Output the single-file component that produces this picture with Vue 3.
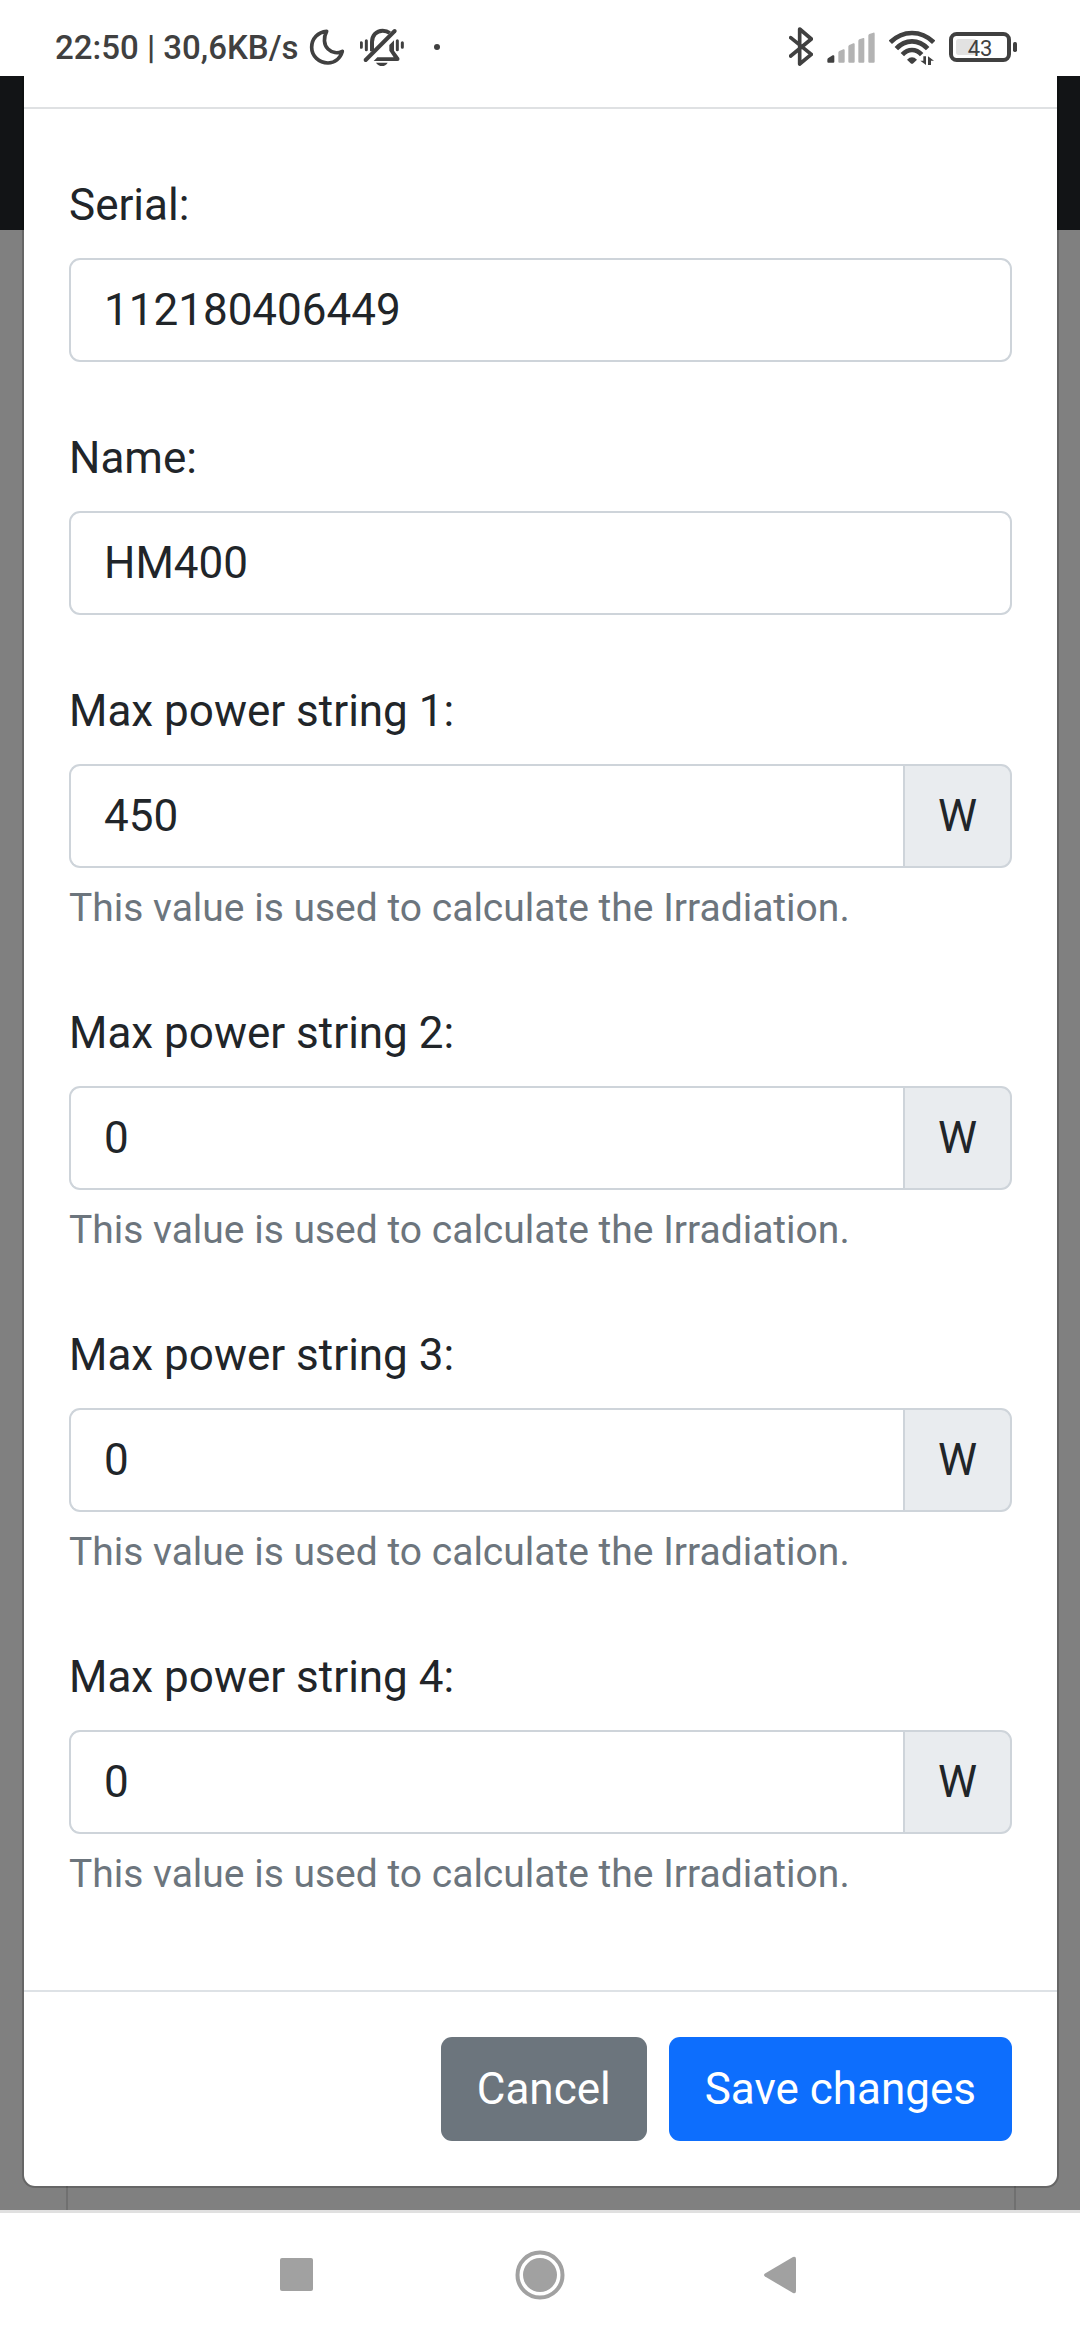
<script setup>
import { ref } from 'vue'

const serial = ref('112180406449')
const name = ref('HM400')
const strings = ref([
  { id: 1, power: '450' },
  { id: 2, power: '0' },
  { id: 3, power: '0' },
  { id: 4, power: '0' }
])
</script>

<template>
  <div class="screen">
    <header class="status">
      <span class="clock">22:50 | 30,6KB/s</span>
      <div class="left-icons">
        <svg class="icon" width="36" viewBox="27 51 108 126" aria-hidden="true">
          <path class="line" stroke-width="11" d="M80 64C54 66 35 86 35 112C35 138 57 159 84 159C104 159 121 146 127 124C113 131 96 129 84 117C71 104 70 82 80 64Z" />
        </svg>
        <svg class="icon" width="44" viewBox="180 51 132 126" aria-hidden="true">
          <path class="line" stroke-width="9" d="M184 98V112M199 92V119M292 92V119M307 98V112" />
          <path class="line butt" stroke-width="12" d="M216 124V96C216 76 229 62 248 62C256 62 263 64 269 69" />
          <path class="line" stroke-width="12" d="M284 63L197 150" />
          <path class="solid" d="M268 105L282 91V122L298 144Q300 153 292 153H221L232 142H281L268 122Z" />
          <path class="solid" d="M228 158H263Q257 168 246 168T228 158Z" />
        </svg>
        <svg class="icon dot" width="6" viewBox="402 51 18 126" aria-hidden="true">
          <circle class="solid" cx="411" cy="111" r="9" />
        </svg>
      </div>
      <div class="right-icons">
        <svg class="icon" width="24" viewBox="27 51 72 126" aria-hidden="true">
          <path class="line" stroke-width="11" d="M32 83L94 133L59 162V57L94 87L32 138" />
        </svg>
        <svg class="icon" width="48" viewBox="141 51 144 126" aria-hidden="true">
          <path class="solid" d="M142 149Q142 145 146 143L158 136Q163 134 163 139V155Q163 158 160 158H145Q142 158 142 155Z" />
          <g fill="#b3b3b3">
            <path d="M175 128Q175 125 178 123L190 118Q194 117 194 121V155Q194 158 191 158H178Q175 158 175 155Z" />
            <path d="M205 110Q205 107 208 105L220 100Q224 99 224 103V155Q224 158 221 158H208Q205 158 205 155Z" />
            <path d="M235 93Q235 90 238 88L250 84Q253 83 253 87V155Q253 158 250 158H238Q235 158 235 155Z" />
            <path d="M265 77Q265 74 268 72L280 68Q284 67 284 71V155Q284 158 281 158H268Q265 158 265 155Z" />
          </g>
        </svg>
        <svg class="icon" width="46" viewBox="324 51 138 126" aria-hidden="true">
          <path class="line butt" stroke-width="14" d="M328 97Q356 69 393 69T458 97M346 116Q366 94 393 94T440 116M364 134Q377 120 393 120T422 134" />
          <path class="solid" d="M378 149Q393 135 408 149L397 160Q393 163 389 160Z" />
          <path class="solid" d="M427 139H435V165L418 152H427ZM441 139L459 152H450V165H441Z" />
        </svg>
        <svg class="icon" width="68" viewBox="507 51 204 126" role="img" aria-label="Battery">
          <rect x="528" y="87" width="62" height="48" rx="8" fill="#e2e2e2" />
          <rect class="line" stroke-width="12" x="513" y="72" width="174" height="78" rx="17" />
          <rect class="solid" x="699" y="96" width="12" height="30" rx="5" />
          <text class="charge" x="600" y="137" text-anchor="middle">43</text>
        </svg>
      </div>
    </header>

    <main class="stage">
      <div class="behind">
        <div class="navbar"></div>
        <div class="card"></div>
      </div>

      <form class="modal" @submit.prevent>
        <div class="modal-head"></div>
        <div class="modal-body">
          <div class="field">
            <label for="serial">Serial:</label>
            <input id="serial" v-model="serial" type="text" />
          </div>
          <div class="field">
            <label for="name">Name:</label>
            <input id="name" v-model="name" type="text" />
          </div>
          <div v-for="s in strings" :key="s.id" class="field">
            <label :for="'power' + s.id">Max power string {{ s.id }}:</label>
            <div class="group">
              <input :id="'power' + s.id" v-model="s.power" type="text" inputmode="numeric" :aria-describedby="'help' + s.id" />
              <span class="unit">W</span>
            </div>
            <p :id="'help' + s.id" class="help">This value is used to calculate the Irradiation.</p>
          </div>
        </div>
        <div class="modal-foot">
          <button type="button" class="cancel">Cancel</button>
          <button type="submit" class="save">Save changes</button>
        </div>
      </form>
    </main>

    <nav class="system">
      <button type="button" aria-label="Recent apps">
        <svg width="50" height="50" viewBox="0 0 50 50"><rect x="7" y="8" width="33" height="33" rx="2" /></svg>
      </button>
      <button type="button" aria-label="Home">
        <svg width="50" height="50" viewBox="0 0 50 50">
          <circle cx="25" cy="25" r="17" />
          <circle class="ring" cx="25" cy="25" r="22.5" />
        </svg>
      </button>
      <button type="button" aria-label="Back">
        <svg width="50" height="50" viewBox="0 0 50 50"><path d="M8 23.500L36 7Q39 6 39 9V41Q39 44 36 43L8 26.500Q6 25 8 23.500Z" /></svg>
      </button>
    </nav>
  </div>
</template>

<style>
body {
  margin: 0;
  background: #fff;
}
</style>

<style scoped>
* {
  box-sizing: border-box;
}

.screen {
  display: flex;
  flex-direction: column;
  min-height: 100vh;
  font-family: Roboto, "Liberation Sans", sans-serif;
  font-size: 44px;
  line-height: 66px;
  color: #212529;
}

.status {
  display: flex;
  align-items: center;
  height: 76px;
  padding: 20px 63px 0 55px;
  color: #404040;
}

.clock {
  font-size: 33px;
  font-weight: 500;
  line-height: 40px;
  white-space: nowrap;
}

.left-icons,
.right-icons {
  display: flex;
  align-items: center;
}

.left-icons {
  gap: 15px;
  margin-left: 10px;
}

.right-icons {
  gap: 14px;
  margin-left: auto;
}

.icon {
  display: block;
  height: 42px;
}

.dot {
  margin-left: 15px;
}

.line {
  fill: none;
  stroke: #404040;
  stroke-linecap: round;
  stroke-linejoin: round;
}

.butt {
  stroke-linecap: butt;
}

.solid,
.charge {
  fill: #404040;
}

.charge {
  font-size: 66px;
}

.stage {
  flex: 1;
  display: grid;
}

.behind,
.modal {
  grid-area: 1 / 1;
}

.behind {
  display: flex;
  flex-direction: column;
  background: #808080;
}

.navbar {
  height: 154px;
  background: #121416;
}

.card {
  flex: 1;
  margin: 0 64px 0 66px;
  border: solid #707070;
  border-width: 0 2px;
}

.modal {
  align-self: start;
  margin: 0 21px 22px 22px;
  border: solid rgba(0, 0, 0, 0.2);
  border-width: 0 2px 2px;
  border-radius: 0 0 13px 13px;
  background: #fff;
  background-clip: padding-box;
}

.modal-head {
  height: 33px;
  border-bottom: 2px solid #dfe1e3;
}

.modal-body {
  display: flex;
  flex-direction: column;
  gap: 44px;
  padding: 44px 45px 87px;
}

.field {
  display: flex;
  flex-direction: column;
}

label {
  padding: 19px 0 20px;
}

input {
  width: 100%;
  min-width: 0;
  height: 104px;
  padding: 0 33px;
  border: 2px solid #ced4da;
  border-radius: 11px;
  background: #fff;
  color: inherit;
  font: inherit;
}

.group {
  display: flex;
}

.group input {
  flex: 1;
  border-right: 0;
  border-radius: 11px 0 0 11px;
}

.unit {
  display: flex;
  align-items: center;
  padding: 0 33px;
  border: 2px solid #ced4da;
  border-radius: 0 11px 11px 0;
  background: #e9ecef;
}

.help {
  margin: 11px 0 0;
  color: #6c757d;
  font-size: 39px;
  line-height: 58px;
}

.modal-foot {
  display: flex;
  justify-content: flex-end;
  gap: 22px;
  padding: 45px;
  border-top: 2px solid #dee2e6;
}

.modal-foot button {
  height: 104px;
  padding: 0 36px;
  border: 0;
  border-radius: 11px;
  color: #fff;
  font: inherit;
}

.cancel {
  background: #6c757d;
}

.save {
  background: #0d6efd;
}

.system {
  display: flex;
  align-items: center;
  justify-content: center;
  gap: 192px;
  height: 130px;
  padding-bottom: 3px;
  border-top: 3px solid #e0e0e0;
  background: #fff;
}

.system button {
  padding: 0;
  border: 0;
  background: none;
}

.system svg {
  display: block;
  fill: #a1a1a1;
}

.system .ring {
  fill: none;
  stroke: #a1a1a1;
  stroke-width: 4px;
}
</style>
